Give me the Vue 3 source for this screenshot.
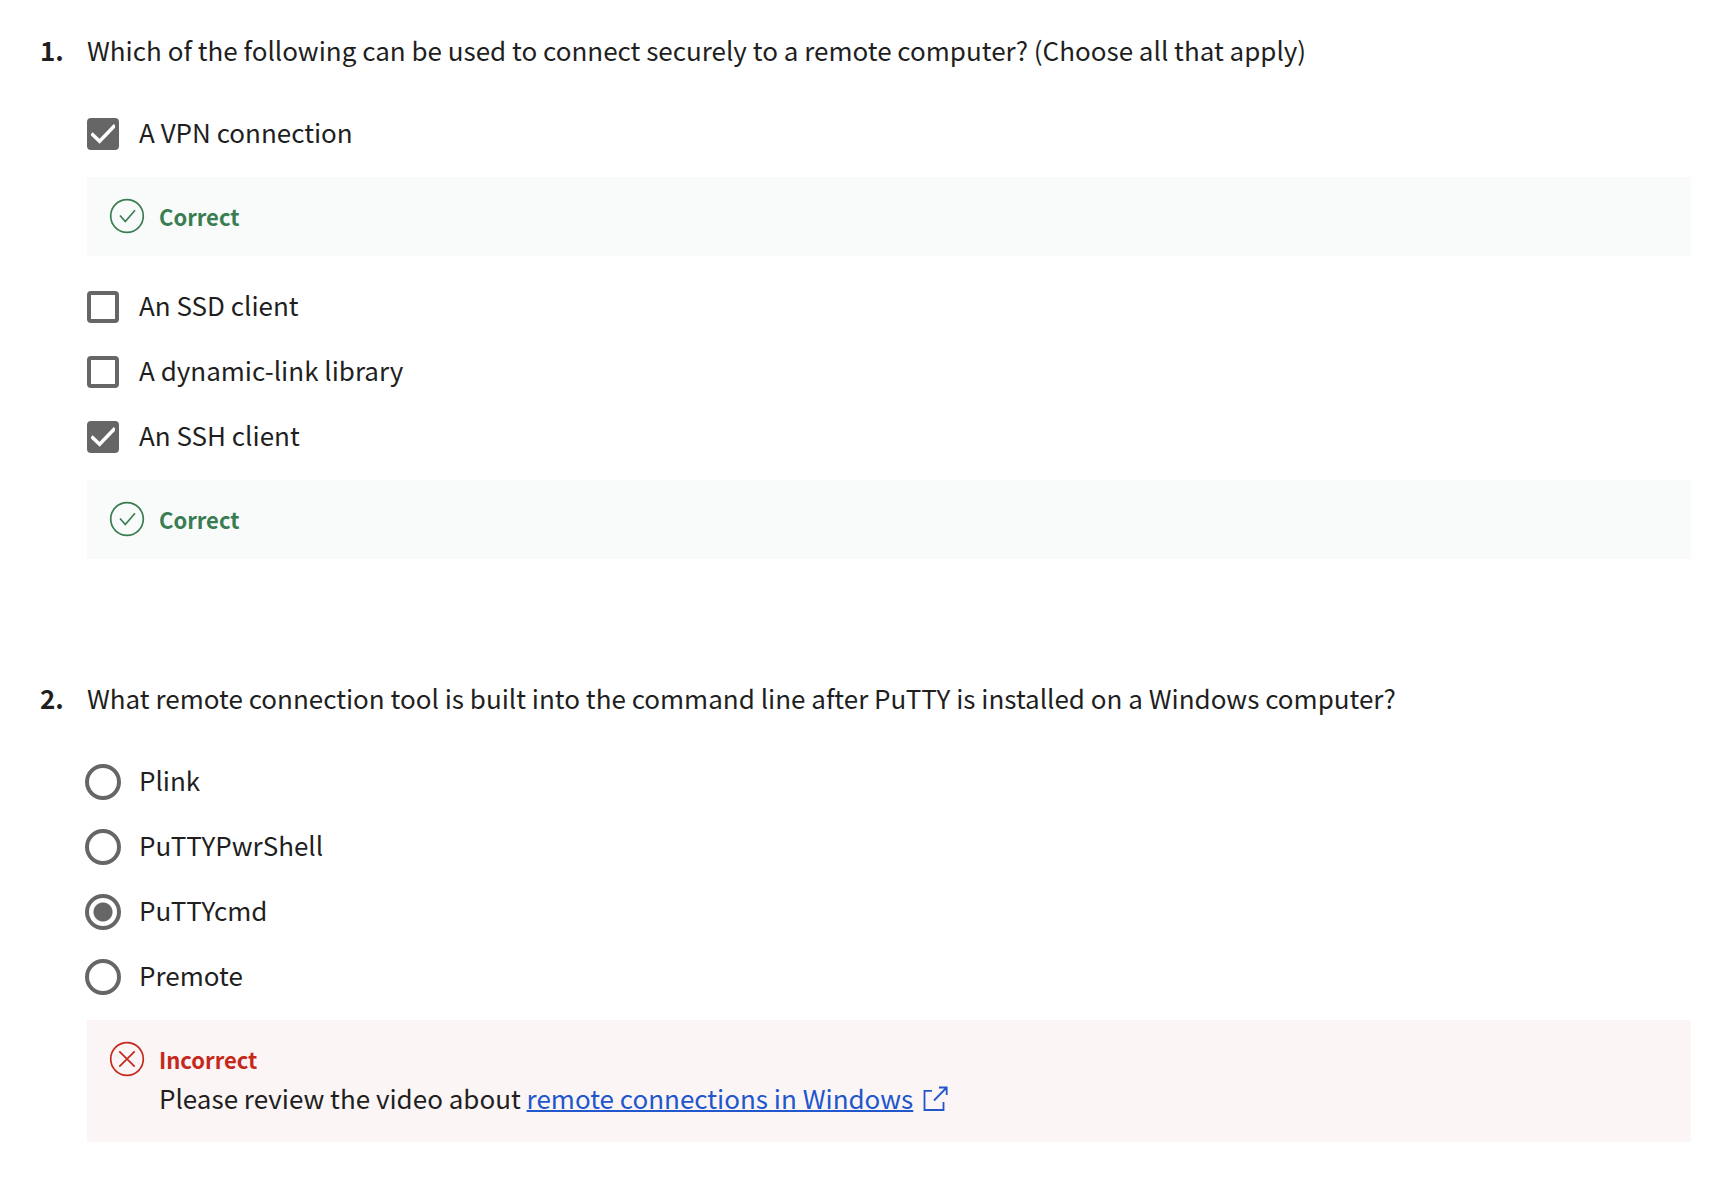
<script setup>
import { ref } from 'vue'

const checkQuestion = {
  prompt: 'Which of the following can be used to connect securely to a remote computer? (Choose all that apply)',
  options: [
    { label: 'A VPN connection', value: 'vpn', correct: true },
    { label: 'An SSD client', value: 'ssd' },
    { label: 'A dynamic-link library', value: 'dll' },
    { label: 'An SSH client', value: 'ssh', correct: true }
  ]
}
const radioQuestion = {
  prompt: 'What remote connection tool is built into the command line after PuTTY is installed on a Windows computer?',
  options: ['Plink', 'PuTTYPwrShell', 'PuTTYcmd', 'Premote']
}
const selected = ref(['vpn', 'ssh'])
const tool = ref('PuTTYcmd')
</script>

<template>
  <main class="quiz">
    <section class="question">
      <span class="number">1.</span>
      <div class="body">
        <p class="prompt">{{ checkQuestion.prompt }}</p>
        <div class="options">
          <template v-for="o in checkQuestion.options" :key="o.value">
            <label class="option">
              <input v-model="selected" class="box" type="checkbox" :value="o.value">
              <span class="label">{{ o.label }}</span>
            </label>
            <div v-if="o.correct" class="feedback correct">
              <svg class="status" viewBox="0 0 36 36" fill="none" stroke="currentColor" stroke-width="1.7">
                <circle cx="18" cy="18" r="16.3" />
                <path d="M11 17.500l5.300 6L26 12.300" />
              </svg>
              <strong class="verdict">Correct</strong>
            </div>
          </template>
        </div>
      </div>
    </section>

    <section class="question">
      <span class="number">2.</span>
      <div class="body">
        <p class="prompt">{{ radioQuestion.prompt }}</p>
        <div class="options">
          <label v-for="o in radioQuestion.options" :key="o" class="option">
            <input v-model="tool" class="dot" type="radio" name="tool" :value="o">
            <span class="label">{{ o }}</span>
          </label>
          <div class="feedback incorrect">
            <svg class="status" viewBox="0 0 36 36" fill="none" stroke="currentColor" stroke-width="1.7">
              <circle cx="18" cy="18" r="16.3" />
              <path d="M10.300 10.300l15.400 15.400M25.700 10.300L10.300 25.700" />
            </svg>
            <div>
              <strong class="verdict">Incorrect</strong>
              <p class="hint">
                Please review the video about
                <a href="#remote-connections">remote connections in Windows</a>
                <svg class="external" viewBox="0 0 26 26" fill="none" stroke="currentColor" stroke-width="1.800">
                  <path d="M9 4.800H1.500V24h19v-8M16 1.500h7.700V9M23.700 1.500L11 14.500" />
                </svg>
              </p>
            </div>
          </div>
        </div>
      </div>
    </section>
  </main>
</template>

<style>
body {
  background: #fff;
}
</style>

<style scoped>
.quiz {
  display: flex;
  flex-direction: column;
  gap: 119px;
  padding: 30px 27px 38px 40px;
  color: #1f1f1f;
  font-family: "Noto Sans CJK SC", "Noto Sans", sans-serif;
  font-size: 26px;
  line-height: 40px;
}
.question {
  display: flex;
}
.number {
  flex: 0 0 47px;
  font-weight: 700;
}
.body {
  flex: 1;
}
.prompt,
.hint {
  margin: 0;
}
.options {
  margin-top: 31px;
}
.option {
  display: flex;
  align-items: center;
  height: 65px;
}
.label {
  padding-bottom: 4px;
}
.box,
.dot {
  appearance: none;
  flex: none;
  box-sizing: border-box;
  border: 4px solid #666;
  background: #fff;
}
.box {
  width: 32px;
  height: 32px;
  margin: 0 20px 0 0;
  border-radius: 4px;
}
.box:checked {
  background: #666 url("data:image/svg+xml,%3Csvg xmlns='http://www.w3.org/2000/svg' viewBox='0 0 32 32'%3E%3Cpath d='M4.500 15.500l8.100 7.800L28 7.300' fill='none' stroke='white' stroke-width='3.400'/%3E%3C/svg%3E") center / 32px no-repeat border-box;
}
.dot {
  width: 36px;
  height: 36px;
  margin: 0 18px 0 -2px;
  border-radius: 50%;
}
.dot:checked {
  background: radial-gradient(circle, #666 9px, #fff 10px);
}
.feedback {
  display: flex;
  gap: 14px;
  margin: 11px 0 18px;
  padding: 19px 22px 20px;
}
.feedback:last-child {
  margin-bottom: 0;
}
.correct {
  background: #f8fbfa;
  color: #3b7d52;
}
.incorrect {
  padding-bottom: 25px;
  background: #fbf5f5;
  color: #c5281c;
}
.status {
  flex: none;
  width: 36px;
  height: 40px;
}
.verdict {
  display: block;
  font-size: 22px;
}
.hint {
  color: #1f1f1f;
  line-height: 38px;
}
.hint a {
  color: #2256cc;
  text-decoration-thickness: 2px;
}
.external {
  width: 26px;
  height: 26px;
  margin-left: 10px;
  color: #2256cc;
  vertical-align: -3px;
}
</style>
